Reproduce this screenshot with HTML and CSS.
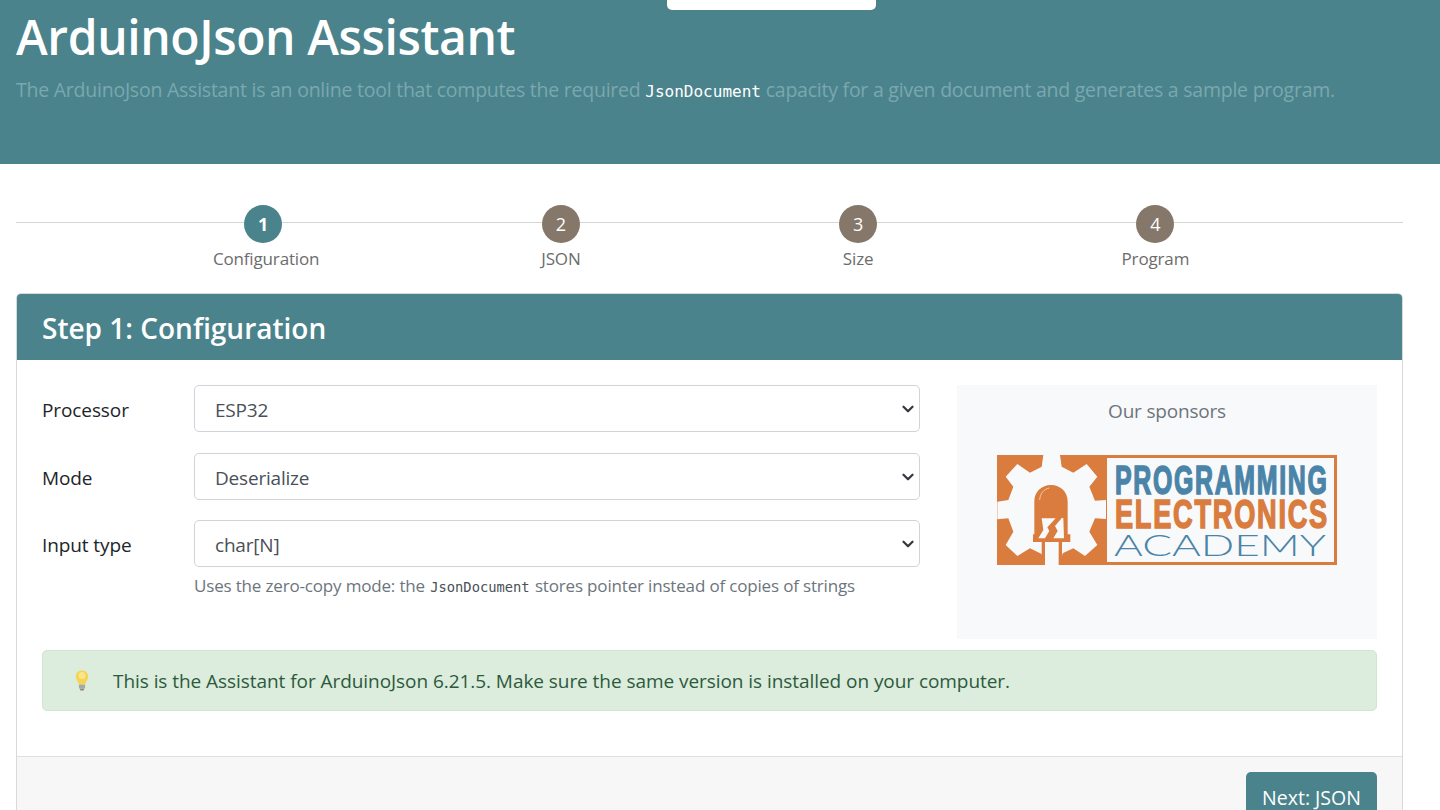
FILE: index.html
```html
<!DOCTYPE html>
<html lang="en">
<head>
<meta charset="utf-8">
<title>ArduinoJson Assistant</title>
<link rel="stylesheet" href="styles.css">
</head>
<body>
<div class="top-tab"></div>
<header class="hero">
  <h1 class="hero-title">ArduinoJson Assistant</h1>
  <p class="hero-lead">The ArduinoJson Assistant is an online tool that computes the required <code class="hero-code">JsonDocument</code> capacity for a given document and generates a sample program.</p>
</header>
<main class="page">
  <ol class="steps">
    <li class="step step-active"><span class="step-dot">1</span><span class="step-label">Configuration</span></li>
    <li class="step"><span class="step-dot">2</span><span class="step-label">JSON</span></li>
    <li class="step"><span class="step-dot">3</span><span class="step-label">Size</span></li>
    <li class="step"><span class="step-dot">4</span><span class="step-label">Program</span></li>
  </ol>
  <section class="card">
    <h2 class="card-header">Step 1: Configuration</h2>
    <div class="card-body">
      <div class="columns">
        <form class="config-form">
          <div class="field">
            <label class="field-label" for="processor">Processor</label>
            <select class="field-select" id="processor"><option>ESP32</option></select>
          </div>
          <div class="field field-tight">
            <label class="field-label" for="mode">Mode</label>
            <select class="field-select" id="mode"><option>Deserialize</option></select>
          </div>
          <div class="field field-last">
            <label class="field-label" for="input">Input type</label>
            <select class="field-select" id="input"><option>char[N]</option></select>
          </div>
          <p class="field-help">Uses the zero-copy mode: the <code class="help-code">JsonDocument</code> stores pointer instead of copies of strings</p>
        </form>
        <aside class="sponsors">
          <div class="sponsors-title">Our sponsors</div>
          <svg class="logo" viewBox="0 0 340 110" width="340" height="110" role="img" aria-label="Programming Electronics Academy">
            <rect x="0" y="0" width="340" height="110" fill="#d97c3e"/>
            <rect x="110" y="3" width="227" height="104" fill="#f8f9fa"/>
            <g transform="translate(-7 -5) scale(.33333)">
              <path fill="#f8f9fa" d="M160 15H210L215 50 250 68 290 42 322 80 298 110 315 152 348 150V207L315 205 298 245 322 285 285 318 250 295 218 310 210 345H160L155 312 120 295 82 318 47 285 70 245 55 205 22 208V155L55 150 70 110 47 80 82 42 120 68 155 50Z"/>
              <path fill="#d97c3e" d="M133 253V155C133 125 155 105 183 105S233 125 233 155V253H241V276H216V345H206V276H165V345H155V276H129V253Z"/>
              <path fill="none" stroke="#f3c9a8" stroke-width="3" d="M149 150C150 132 160 118 178 114"/>
              <path fill="#f8f9fa" d="M155 205H197L172 232 178 243 165 265H145L160 240ZM216 203L220 205 222 265H190L203 243 195 228Z"/>
            </g>
            <text class="logo-word logo-blue" transform="translate(118 39) scale(.6 1)" textLength="353" lengthAdjust="spacing">PROGRAMMING</text>
            <text class="logo-word logo-orange" transform="translate(118 72.500) scale(.655 1)" textLength="324" lengthAdjust="spacing">ELECTRONICS</text>
            <text class="logo-thin" x="117" y="101" textLength="212" lengthAdjust="spacingAndGlyphs">ACADEMY</text>
          </svg>
        </aside>
      </div>
      <div class="alert">
        <svg class="alert-icon" viewBox="0 0 14 21" width="14" height="21" aria-hidden="true">
          <path fill="#f5d453" d="M7 .5C3.4.5.8 3.2.8 6.6c0 3.2 2.3 4.6 2.9 7.9h6.6c.6-3.3 2.9-4.7 2.9-7.9C13.200 3.200 10.600.5 7 .5Z"/>
          <ellipse cx="7" cy="5.500" rx="3.500" ry="3.500" fill="#fae58a"/>
          <rect x="3.900" y="14.500" width="6.200" height="4.200" rx="1" fill="#a9a9a4"/>
          <rect x="5" y="18.700" width="4" height="1.800" rx=".8" fill="#87877f"/>
        </svg>
        <span class="alert-text">This is the Assistant for ArduinoJson 6.21.5. Make sure the same version is installed on your computer.</span>
      </div>
    </div>
    <div class="card-footer">
      <button class="next-button" type="button">Next: JSON</button>
    </div>
  </section>
</main>
</body>
</html>
```
FILE: styles.css
```css
* { box-sizing: border-box; }
html, body { height: 810px; overflow: hidden; }
body {
  margin: 0;
  position: relative;
  background: #fff;
  color: #212529;
  font-family: "Open Sans", "Noto Sans", sans-serif;
  font-size: 19px;
  letter-spacing: -0.2px;
}
.top-tab {
  position: absolute;
  left: 667px;
  top: 0;
  width: 209px;
  height: 10px;
  background: #fff;
  border-radius: 0 0 5px 5px;
}
.hero {
  height: 164px;
  background: #4a838c;
  padding: 9px 16px 0;
}
.hero-title {
  margin: 0;
  color: #fff;
  font-size: 48px;
  font-weight: 600;
  line-height: 56px;
  letter-spacing: -0.4px;
}
.hero-lead {
  margin: 12px 0 0;
  color: #7aa8ae;
  font-size: 19.500px;
  line-height: 26px;
  letter-spacing: -0.24px;
}
.hero-code {
  color: #fff;
  font-family: "DejaVu Sans Mono", monospace;
  font-size: 16px;
  letter-spacing: 0;
}
.page { padding: 0 37px 0 16px; }
.steps {
  list-style: none;
  margin: 0;
  padding: 41px 99px 0;
  height: 129px;
  display: grid;
  grid-template-columns: repeat(4, 1fr);
  background: linear-gradient(#d5d5d5, #d5d5d5) 0 58px / 100% 1px no-repeat;
}
.step {
  display: flex;
  flex-direction: column;
  align-items: center;
  color: #6c6c6c;
}
.step-dot {
  width: 38px;
  height: 38px;
  border-radius: 50%;
  background: #85786a;
  color: #fff;
  font-size: 18px;
  line-height: 38px;
  text-align: center;
}
.step-active .step-dot {
  background: #4a838c;
  font-weight: 700;
  margin-left: -1px;
}
.step-active .step-label { margin-left: 5px; }
.step-label {
  margin-top: 3px;
  font-size: 17px;
  line-height: 26px;
  letter-spacing: -0.15px;
}
.card {
  border: 1px solid #d9d9d9;
  border-radius: 5px 5px 0 0;
}
.card-header {
  margin: 0;
  height: 66px;
  padding: 0 25px;
  background: #4a838c;
  color: #fff;
  font-size: 28px;
  font-weight: 600;
  line-height: 68px;
  border-radius: 4px 4px 0 0;
  letter-spacing: 0;
}
.card-body { padding: 25px 25px 45px; }
.columns {
  display: grid;
  grid-template-columns: 878px 420px;
  gap: 37px;
}
.field {
  display: flex;
  align-items: center;
  margin-bottom: 21px;
}
.field-tight { margin-bottom: 20px; }
.field-last { margin-bottom: 0; }
.field-label {
  flex: 0 0 152px;
  padding-top: 2px;
  color: #212529;
  font-size: 19px;
  letter-spacing: -0.1px;
}
.field-select {
  flex: 1;
  height: 47px;
  padding: 2px 40px 0 20px;
  border: 1px solid #ced4da;
  border-radius: 5px;
  color: #495057;
  font: inherit;
  font-size: 19px;
  letter-spacing: -0.2px;
  appearance: none;
  background: #fff url("data:image/svg+xml,%3Csvg xmlns='http://www.w3.org/2000/svg' viewBox='0 0 16 16'%3E%3Cpath fill='none' stroke='%23343a40' stroke-linecap='round' stroke-linejoin='round' stroke-width='3' d='M2 5l6 6 6-6'/%3E%3C/svg%3E") no-repeat right 5px center / 12px 12px;
}
.field-help {
  margin: 7px 0 0 152px;
  color: #6c757d;
  font-size: 17px;
  line-height: 24px;
  letter-spacing: -0.17px;
}
.help-code {
  margin: 0 1px;
  color: #495057;
  font-family: "DejaVu Sans Mono", monospace;
  font-size: 13.770px;
  letter-spacing: 0;
}
.sponsors {
  height: 254px;
  background: #f8f9fa;
  padding-top: 13px;
  text-align: center;
  color: #6c757d;
}
.sponsors-title { font-size: 19px; line-height: 26px; }
.logo { display: block; margin: 31px 0 0 40px; }
.logo-word {
  font-family: "Liberation Sans", sans-serif;
  font-size: 41.500px;
  font-weight: 700;
  letter-spacing: 0;
  stroke-width: 1.600px;
}
.logo-blue { fill: #4a84a8; stroke: #4a84a8; }
.logo-orange { fill: #d97c3e; stroke: #d97c3e; }
.logo-thin {
  font-family: "Lato", sans-serif;
  font-size: 29px;
  font-weight: 300;
  fill: #4a84a8;
  letter-spacing: 0;
}
.alert {
  display: flex;
  align-items: center;
  height: 61px;
  margin-top: 11px;
  padding-left: 32px;
  background: #dcecdd;
  border: 1px solid #cfe6d2;
  border-radius: 5px;
  color: #2c5a3c;
}
.alert-icon { flex: none; }
.alert-text { margin-left: 24px; font-size: 19px; letter-spacing: -0.055px; }
.card-footer {
  height: 80px;
  padding: 15px 25px;
  display: flex;
  justify-content: flex-end;
  background: #f7f7f7;
  border-top: 1px solid #dfdfdf;
}
.next-button {
  width: 131px;
  height: 50px;
  border: 0;
  border-radius: 5px;
  background: #4a838c;
  color: #fff;
  font: inherit;
  font-size: 19.500px;
  letter-spacing: 0;
}
```
